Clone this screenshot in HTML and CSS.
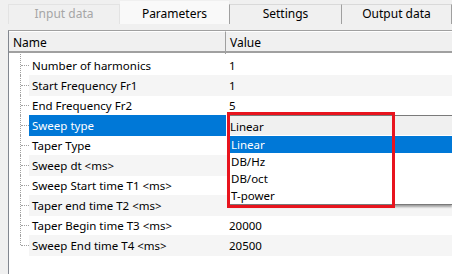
FILE: index.html
```html
<!DOCTYPE html>
<html lang="en">
<head>
  <meta charset="UTF-8">
  <title>Parameters</title>
  <link rel="stylesheet" href="styles.css">
</head>
<body>
  <div class="tabs">
    <div class="tab tab-input disabled">Input data</div>
    <div class="tab tab-params active">Parameters</div>
    <div class="tab tab-settings">Settings</div>
    <div class="tab tab-output">Output data</div>
  </div>

  <div class="panel">
    <div class="grid-head">
      <div class="head-cell head-name">Name</div>
      <div class="head-cell">Value</div>
    </div>

    <div class="grid-body">
      <div class="row"><div class="tree"></div><div class="name">Number of harmonics</div><div class="value">1</div></div>
      <div class="row alt"><div class="tree"></div><div class="name">Start Frequency Fr1</div><div class="value">1</div></div>
      <div class="row"><div class="tree"></div><div class="name">End Frequency Fr2</div><div class="value">5</div></div>
      <div class="row selected"><div class="tree"></div><div class="name">Sweep type</div><div class="value"></div></div>
      <div class="row"><div class="tree"></div><div class="name">Taper Type</div><div class="value"></div></div>
      <div class="row alt"><div class="tree"></div><div class="name">Sweep dt &lt;ms&gt;</div><div class="value"></div></div>
      <div class="row"><div class="tree"></div><div class="name">Sweep Start time T1 &lt;ms&gt;</div><div class="value"></div></div>
      <div class="row alt"><div class="tree"></div><div class="name">Taper end time T2 &lt;ms&gt;</div><div class="value"></div></div>
      <div class="row"><div class="tree"></div><div class="name">Taper Begin time T3 &lt;ms&gt;</div><div class="value">20000</div></div>
      <div class="row alt last"><div class="tree"></div><div class="name">Sweep End time T4 &lt;ms&gt;</div><div class="value">20500</div></div>

      <!-- open combo box for "Sweep type" -->
      <div class="combo">
        <div class="combo-box">Linear</div>
        <div class="combo-list">
          <div class="combo-item picked">Linear</div>
          <div class="combo-item">DB/Hz</div>
          <div class="combo-item">DB/oct</div>
          <div class="combo-item">T-power</div>
        </div>
      </div>
      <div class="mark"></div>
    </div>
  </div>
</body>
</html>
```

FILE: styles.css
```css
body {
  margin: 0;
  background-color: #f0f0f0;
  color: #000;
  font-family: 'Noto Sans', 'Open Sans', sans-serif;
  font-size: 11.5px;
  width: 452px;
  height: 274px;
  overflow: hidden;
}
.tabs {
  display: flex;
  align-items: flex-end;
  height: 24px;
  padding-left: 8px;
}
.tab {
  height: 20px;
  line-height: 18px;
  font-size: 12px;
  text-align: center;
  border: 1px solid #d9d9d9;
  border-bottom: none;
  background-color: #f0f0f0;
  box-sizing: border-box;
}
.tab-input {
  width: 112px;
  border-color: #e3e3e3;
}
.tab-params {
  width: 109px;
}
.tab-settings {
  width: 113px;
  border-left: 1px solid #a0a0a0;
  border-right: 1px solid #a0a0a0;
}
.tab-output {
  width: 110px;
  border-left: none;
  border-right: 1px solid #a0a0a0;
}
.tab.disabled {
  color: #a6a6a6;
}
.tab.active {
  height: 23px;
  line-height: 23px;
  background-color: #f9f9f9;
  border-color: #f9f9f9;
}
.panel {
  margin: 6px 0 0 8px;
  height: 250px;
  background: #fff;
  border-left: 1px solid #828790;
  border-top: 1px solid #a0a0a0;
}
.grid-head {
  display: grid;
  grid-template-columns: 217px 1fr;
  height: 20px;
  background-color: #f0f0f0;
  border-bottom: 2px solid #a0a0a0;
}
.head-cell {
  padding-left: 4px;
  line-height: 22px;
  font-size: 12px;
  border-top: 1px solid #fff;
}
.head-name {
  border-right: 1px solid #a0a0a0;
}
.grid-body {
  position: relative;
  padding-top: 2px;
}
.row {
  display: grid;
  grid-template-columns: 20px 197px 1fr;
  height: 20px;
  line-height: 21px;
}
.row.alt .name,
.row.alt .value {
  background-color: #f5f5f5;
}
.name {
  padding-left: 3px;
  white-space: nowrap;
}
.value {
  padding-left: 3px;
}
.row.selected .name {
  background-color: #0078d7;
  color: #fff;
}
.tree {
  position: relative;
}
.tree::before {
  content: "";
  position: absolute;
  left: 11px;
  top: 0;
  height: 20px;
  border-left: 1px dotted #a0a0a0;
}
.row:first-child .tree::before {
  top: -3px;
  height: 23px;
}
.row.last .tree::before {
  height: 10px;
}
.tree::after {
  content: "";
  position: absolute;
  left: 12px;
  top: 10px;
  width: 8px;
  border-top: 1px dotted #a0a0a0;
}
.combo {
  position: absolute;
  left: 219px;
  top: 62px;
  right: 0;
}
.combo-box {
  height: 20px;
  line-height: 21px;
  padding-left: 2px;
  background-color: #f0f0f0;
  border-top: 1px solid #7a7a7a;
  box-sizing: border-box;
}
.combo-list {
  margin-left: 1px;
  background: #fff;
  border-bottom: 1px solid #7a7a7a;
  box-shadow: 0 2px 2px rgba(0, 0, 0, 0.35);
  padding-top: 1px;
}
.combo-item {
  height: 17px;
  line-height: 17px;
  padding-left: 2px;
}
.combo-item.picked {
  background-color: #0078d7;
  color: #fff;
}
.mark {
  position: absolute;
  left: 218px;
  top: 59px;
  width: 162px;
  height: 90px;
  border: 3px solid #e8141e;
}
```
